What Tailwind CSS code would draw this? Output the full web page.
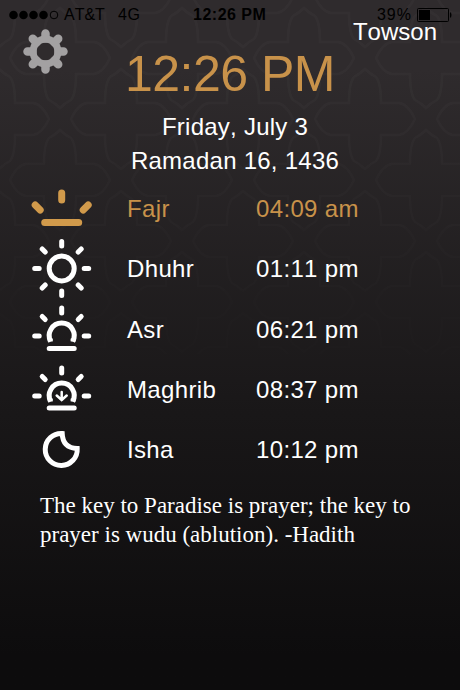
<!DOCTYPE html>
<html lang="en">
<head>
    <meta charset="UTF-8">
    <meta name="viewport" content="width=device-width, initial-scale=1.0">
    <title>Prayer Times</title>
    <script src="https://cdn.jsdelivr.net/npm/@tailwindcss/browser@4"></script>
</head>
<body class="bg-[#0d0c0d]">
    <div class="relative w-[460px] h-[690px] overflow-hidden bg-linear-to-b from-[#2f2b2d] from-10% via-[#191718] via-60% to-[#0d0c0d] to-95% font-['Liberation_Sans',Arial,sans-serif] text-white [font-kerning:none]">
        <!-- Background ornament -->
        <svg class="absolute inset-0" width="460" height="690">
            <defs>
                <pattern id="tile" width="122" height="122" patternUnits="userSpaceOnUse" patternTransform="translate(-1 -3)">
                    <g fill="none" stroke="#fff" stroke-opacity=".024" stroke-width="2.500">
                        <path id="cross" d="M61 11Q66 16 72 19Q77 25 77 45H95Q104 46 111 61Q104 76 95 77H77Q77 97 72 103Q66 106 61 111Q56 106 50 103Q45 97 45 77H27Q18 76 11 61Q18 46 27 45H45Q45 25 50 19Q56 16 61 11Z"/>
                        <use href="#cross" x="61" y="61"/>
                        <use href="#cross" x="-61" y="61"/>
                        <use href="#cross" x="61" y="-61"/>
                        <use href="#cross" x="-61" y="-61"/>
                    </g>
                </pattern>
                <linearGradient id="fade" x2="0" y2="1">
                    <stop offset=".1" stop-color="#fff"/>
                    <stop offset=".65" stop-color="#000"/>
                </linearGradient>
                <mask id="fadeMask"><rect width="460" height="690" fill="url(#fade)"/></mask>
            </defs>
            <rect width="460" height="690" fill="url(#tile)" mask="url(#fadeMask)"/>
        </svg>

        <div class="relative">
            <!-- Status bar -->
            <div class="flex h-[30px] pl-[9px] pr-2 items-center text-[16px] text-black">
                <div class="flex w-[184px] items-center whitespace-nowrap">
                    <svg class="mr-[5px]" width="50" height="10">
                        <circle cx="4.5" cy="5" r="4.3"/>
                        <circle cx="14.5" cy="5" r="4.3"/>
                        <circle cx="24.5" cy="5" r="4.3"/>
                        <circle cx="34.5" cy="5" r="4.3"/>
                        <circle cx="45" cy="5" r="3.8" fill="none" stroke="#000"/>
                    </svg>
                    <span>AT&amp;T</span>
                    <span class="ml-[13px] tracking-[0.8px]">4G</span>
                </div>
                <span class="font-bold tracking-[0.5px]">12:26 PM</span>
                <span class="ml-auto tracking-[1px]">39%</span>
                <svg class="ml-[5px]" width="35" height="14">
                    <rect x=".5" y=".5" width="31" height="13" rx="1" fill="none" stroke="#000"/>
                    <rect x="2" y="2" width="11" height="10"/>
                    <path d="M33 4.5h1q1 2.500 0 5h-1z"/>
                </svg>
            </div>

            <!-- Settings, clock, city -->
            <div class="flex h-[80px] px-[23px]">
                <svg class="-mt-[1px] shrink-0" width="45" height="45" viewBox="-22.500 -22.500 45 45">
                    <g stroke="#a3a1a2" stroke-width="8.500" stroke-linecap="round">
                        <path d="M0-18V-13M0 18V13M-18 0H-13M18 0H13M-12.700-12.700L-9-9M12.700-12.700L9-9M-12.700 12.700L-9 9M12.700 12.700L9 9"/>
                        <circle r="12.500" fill="none" stroke-width="7"/>
                    </g>
                </svg>
                <h1 class="mt-[17px] ml-[57px] mr-[-20px] text-[50px] leading-[54px] whitespace-nowrap tracking-[-0.5px] text-[#c8924a]">12:26 PM</h1>
                <span class="ml-auto -mt-[12px] text-[24px] leading-7">Towson</span>
            </div>

            <!-- Dates -->
            <div class="pl-[10px] text-center text-[24px] leading-[34px] tracking-[0.25px]">
                <p>Friday, July 3</p>
                <p>Ramadan 16, 1436</p>
            </div>

            <!-- Prayer times -->
            <div class="mt-[1px] grid grid-cols-[96px_129px_1fr] auto-rows-[60.300px] items-center pl-[31px] text-[24px] tracking-[0.35px]">
                <svg width="62" height="60" viewBox="-30.700 -31 62 60" fill="none" stroke="#d19a4b" stroke-width="7" stroke-linecap="round">
                    <path d="M0-17V-10M-26.500-5L-21.500 0M26.500-5L21.500 0M-17 12.500H17"/>
                </svg>
                <span class="text-[#c8924a]">Fajr</span>
                <span class="text-[#c8924a]">04:09 am</span>

                <svg width="62" height="60" viewBox="-30.700 -29.500 62 60" fill="none" stroke="#fff" stroke-width="5" stroke-linecap="round">
                    <circle r="12.500"/>
                    <path d="M0-27V-22.500M0 22.500V27M-27 0H-22.500M22.500 0H27M-19.500-19.500L-16.500-16.500M19.500-19.500L16.500-16.500M-19.500 19.500L-16.500 16.500M19.500 19.500L16.500 16.500"/>
                </svg>
                <span>Dhuhr</span>
                <span>01:11 pm</span>

                <svg width="62" height="60" viewBox="-30.700 -30 62 60" fill="none" stroke="#fff" stroke-width="5" stroke-linecap="round">
                    <path d="M-11 11.500A12.500 12.500 0 1 1 11 11.500" stroke-linecap="butt"/>
                    <path d="M-14 11.500H-9V8.500L-14 8ZM14 11.500H9V8.500L14 8Z" fill="#fff" stroke="none"/>
                    <path d="M0-22V-17M-27 6H-22.500M22.500 6H27M-19.500-13.500L-16.500-10.500M19.500-13.500L16.500-10.500M-12.500 18.500H12.500"/>
                </svg>
                <span>Asr</span>
                <span>06:21 pm</span>

                <svg width="62" height="60" viewBox="-30.700 -30 62 60" fill="none" stroke="#fff" stroke-width="5" stroke-linecap="round">
                    <path d="M-11 11.500A12.500 12.500 0 1 1 11 11.500" stroke-linecap="butt"/>
                    <path d="M-14 11.500H-9V8.500L-14 8ZM14 11.500H9V8.500L14 8Z" fill="#fff" stroke="none"/>
                    <path d="M0-22V-17M-27 6H-22.500M22.500 6H27M-19.500-13.500L-16.500-10.500M19.500-13.500L16.500-10.500M-12.500 18H12.500"/>
                    <path d="M0 2V10M-5 5.500L0 10L5 5.500" stroke-width="2.500"/>
                </svg>
                <span>Maghrib</span>
                <span>08:37 pm</span>

                <svg width="62" height="60" viewBox="-30.700 -30 62 60" fill="none" stroke="#fff" stroke-width="5">
                    <path d="M.5-16.500A16 16 0 1 0 15.500-1.500Q1-2 .5-16.500Z"/>
                </svg>
                <span>Isha</span>
                <span>10:12 pm</span>
            </div>

            <!-- Hadith -->
            <p class="mt-[11px] pl-[40px] font-['Liberation_Serif','Times_New_Roman',serif] text-[23px] leading-[29px] whitespace-nowrap [font-kerning:auto]">The key to Paradise is prayer; the key to<br>prayer is wudu (ablution). -Hadith</p>
        </div>
    </div>
</body>
</html>
